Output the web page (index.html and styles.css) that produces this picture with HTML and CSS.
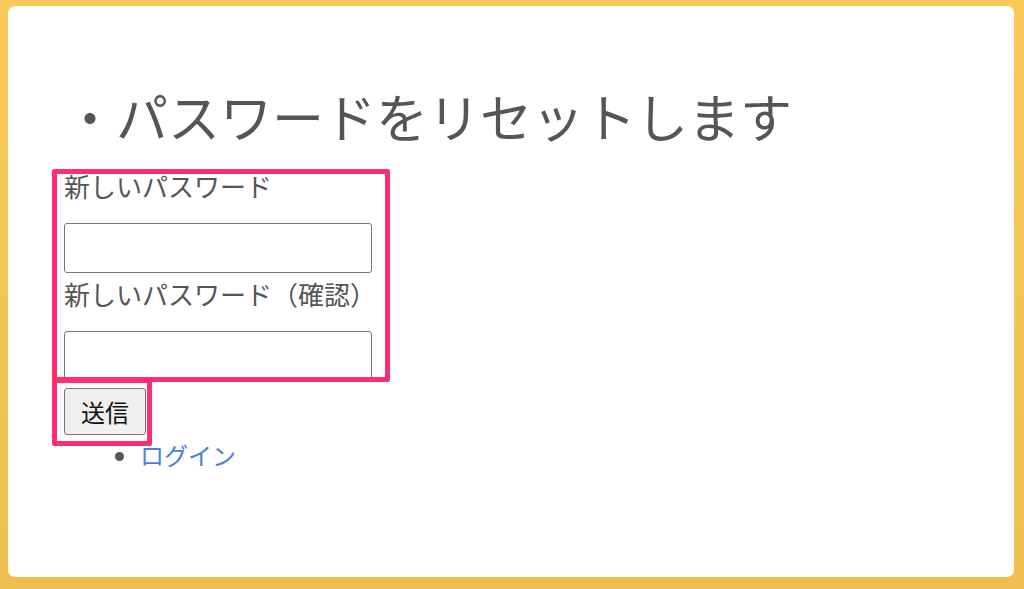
FILE: index.html
```html
<!DOCTYPE html>
<html lang="ja">
<head>
<meta charset="utf-8">
<title>パスワードをリセットします</title>
<link rel="stylesheet" href="styles.css">
</head>
<body>
<div class="frame">
  <div class="card">
    <h1 class="title">・パスワードをリセットします</h1>
    <form class="form">
      <label class="label">新しいパスワード</label>
      <input class="input" type="password">
      <label class="label">新しいパスワード（確認）</label>
      <input class="input" type="password">
      <button class="btn" type="button">送信</button>
    </form>
    <ul class="links">
      <li><a class="link" href="#">ログイン</a></li>
    </ul>
    <div class="mark mark-fields"></div>
    <div class="mark mark-btn"></div>
  </div>
</div>
</body>
</html>
```
FILE: styles.css
```css
html, body {
  margin: 0;
  padding: 0;
}
body {
  width: 1024px;
  height: 589px;
  overflow: hidden;
  font-family: "Noto Sans CJK JP", "Noto Sans", sans-serif;
}
.frame {
  box-sizing: border-box;
  width: 1024px;
  height: 589px;
  padding: 6px 10px 12px 8px;
  background: linear-gradient(#fac95a, #eebf50);
}
.card {
  position: relative;
  box-sizing: border-box;
  height: 100%;
  background: #fff;
  border-radius: 7px;
  padding: 75px 0 0 56px;
  color: #555;
}
.title {
  margin: 0;
  font-size: 52px;
  font-weight: 400;
  line-height: 70px;
  color: #555;
}
.form {
  margin: 14px 0 0;
}
.label {
  display: block;
  padding-top: 4px;
  font-size: 26px;
  line-height: 34px;
  margin-bottom: 20px;
  color: #555;
}
.input {
  display: block;
  box-sizing: border-box;
  width: 308px;
  height: 50px;
  margin: 0;
  border: 1px solid #767676;
  border-radius: 3px;
  background: #fff;
}
.btn {
  display: block;
  box-sizing: border-box;
  margin-top: 7px;
  width: 82px;
  height: 47px;
  font-family: "Noto Sans CJK JP", sans-serif;
  font-size: 24px;
  color: #111;
  background: #efefef;
  border: 1px solid #767676;
  border-radius: 3px;
}
.links {
  margin: 1px 0 0;
  padding-left: 76px;
  font-size: 24px;
  line-height: 38px;
  color: #555;
}
.link {
  color: #4a7fd6;
  text-decoration: none;
}
.mark {
  position: absolute;
  border: 5px solid #ff2e6e;
  border-radius: 2px;
  box-sizing: border-box;
}
.mark-fields {
  left: 44px;
  top: 163px;
  width: 338px;
  height: 213px;
}
.mark-btn {
  left: 44px;
  top: 372px;
  width: 100px;
  height: 68px;
}
```
